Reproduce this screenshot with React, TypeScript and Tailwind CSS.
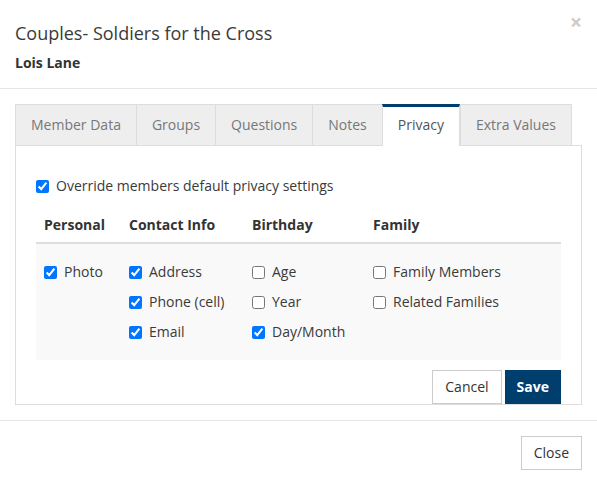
import React from 'react';

type Item = { label: string; checked: boolean };

const columns: { title: string; items: Item[] }[] = [
  { title: 'Personal', items: [{ label: 'Photo', checked: true }] },
  {
    title: 'Contact Info',
    items: [
      { label: 'Address', checked: true },
      { label: 'Phone (cell)', checked: true },
      { label: 'Email', checked: true },
    ],
  },
  {
    title: 'Birthday',
    items: [
      { label: 'Age', checked: false },
      { label: 'Year', checked: false },
      { label: 'Day/Month', checked: true },
    ],
  },
  {
    title: 'Family',
    items: [
      { label: 'Family Members', checked: false },
      { label: 'Related Families', checked: false },
    ],
  },
];

const tabs = ['Member Data', 'Groups', 'Questions', 'Notes', 'Privacy', 'Extra Values'];

const Check: React.FC<Item> = ({ label, checked }) => (
  <label className="flex h-5 items-center text-[14px] leading-5 text-[#3a3a3a]">
    <input type="checkbox" defaultChecked={checked} className="m-0 mr-[7px] h-[13px] w-[13px]" />
    {label}
  </label>
);

export default function App() {
  return (
    <div
      className="relative h-[485px] w-[597px] bg-white text-[#333]"
      style={{ fontFamily: "'Open Sans', 'Liberation Sans', sans-serif" }}
    >
      {/* Header */}
      <div className="border-b border-[#e5e5e5] px-[15px] pt-[20px] pb-[15px]">
        <h4 className="text-[18px] leading-[26px] text-[#3a3a3a]">Couples- Soldiers for the Cross</h4>
        <div className="mt-[7px] text-[14px] font-bold leading-5 text-[#333]">Lois Lane</div>
        <button className="absolute right-[15px] top-[12px] text-[21px] font-bold leading-none text-black opacity-20">
          ×
        </button>
      </div>

      {/* Body */}
      <div className="px-[15px] pt-[15px] pb-[15px]">
        <div className="flex">
          {tabs.map((t, i) => {
            const active = t === 'Privacy';
            return (
              <div
                key={t}
                className={
                  active
                    ? 'relative z-10 -mb-px border-x border-t-[3px] border-x-[#ddd] border-t-[#003e6e] bg-white px-[15px] pt-[8px] pb-[11px] text-[14px] leading-5 text-[#555]'
                    : 'border-t border-l border-[#ddd] bg-[#eee] px-[15px] pt-[10px] pb-[10px] text-[14px] leading-5 text-[#777]' +
                      (i === tabs.length - 1 ? ' border-r' : '')
                }
              >
                {t}
              </div>
            );
          })}
        </div>
        <div className="border border-[#ddd] px-[20px] pt-[30px]">
          <div className="mb-[10px]">
            <Check label="Override members default privacy settings" checked />
          </div>
          <div className="grid grid-cols-[85px_123px_121px_1fr]">
            {columns.map((c) => (
              <div key={c.title} className="border-b-2 border-[#ddd] px-2 pt-[9px] pb-[7px] text-[14px] font-bold leading-5 text-[#333]">
                {c.title}
              </div>
            ))}
            {columns.map((c) => (
              <div key={c.title} className="flex flex-col gap-[10px] bg-[#f9f9f9] px-2 py-[18px]">
                {c.items.map((it) => (
                  <Check key={it.label} {...it} />
                ))}
              </div>
            ))}
          </div>
          <div className="mt-[10px] flex justify-end gap-[3px]">
            <button className="border border-[#ccc] bg-white px-3 py-[6px] text-[14px] leading-5 text-[#333]">
              Cancel
            </button>
            <button className="border border-[#003e6e] bg-[#003e6e] px-[11px] py-[6px] text-[14px] font-bold leading-5 text-white">
              Save
            </button>
          </div>
        </div>
      </div>

      {/* Footer */}
      <div className="flex justify-end border-t border-[#e5e5e5] p-[15px]">
        <button className="border border-[#ccc] bg-white px-3 py-[6px] text-[14px] leading-5 text-[#333]">Close</button>
      </div>
    </div>
  );
}
